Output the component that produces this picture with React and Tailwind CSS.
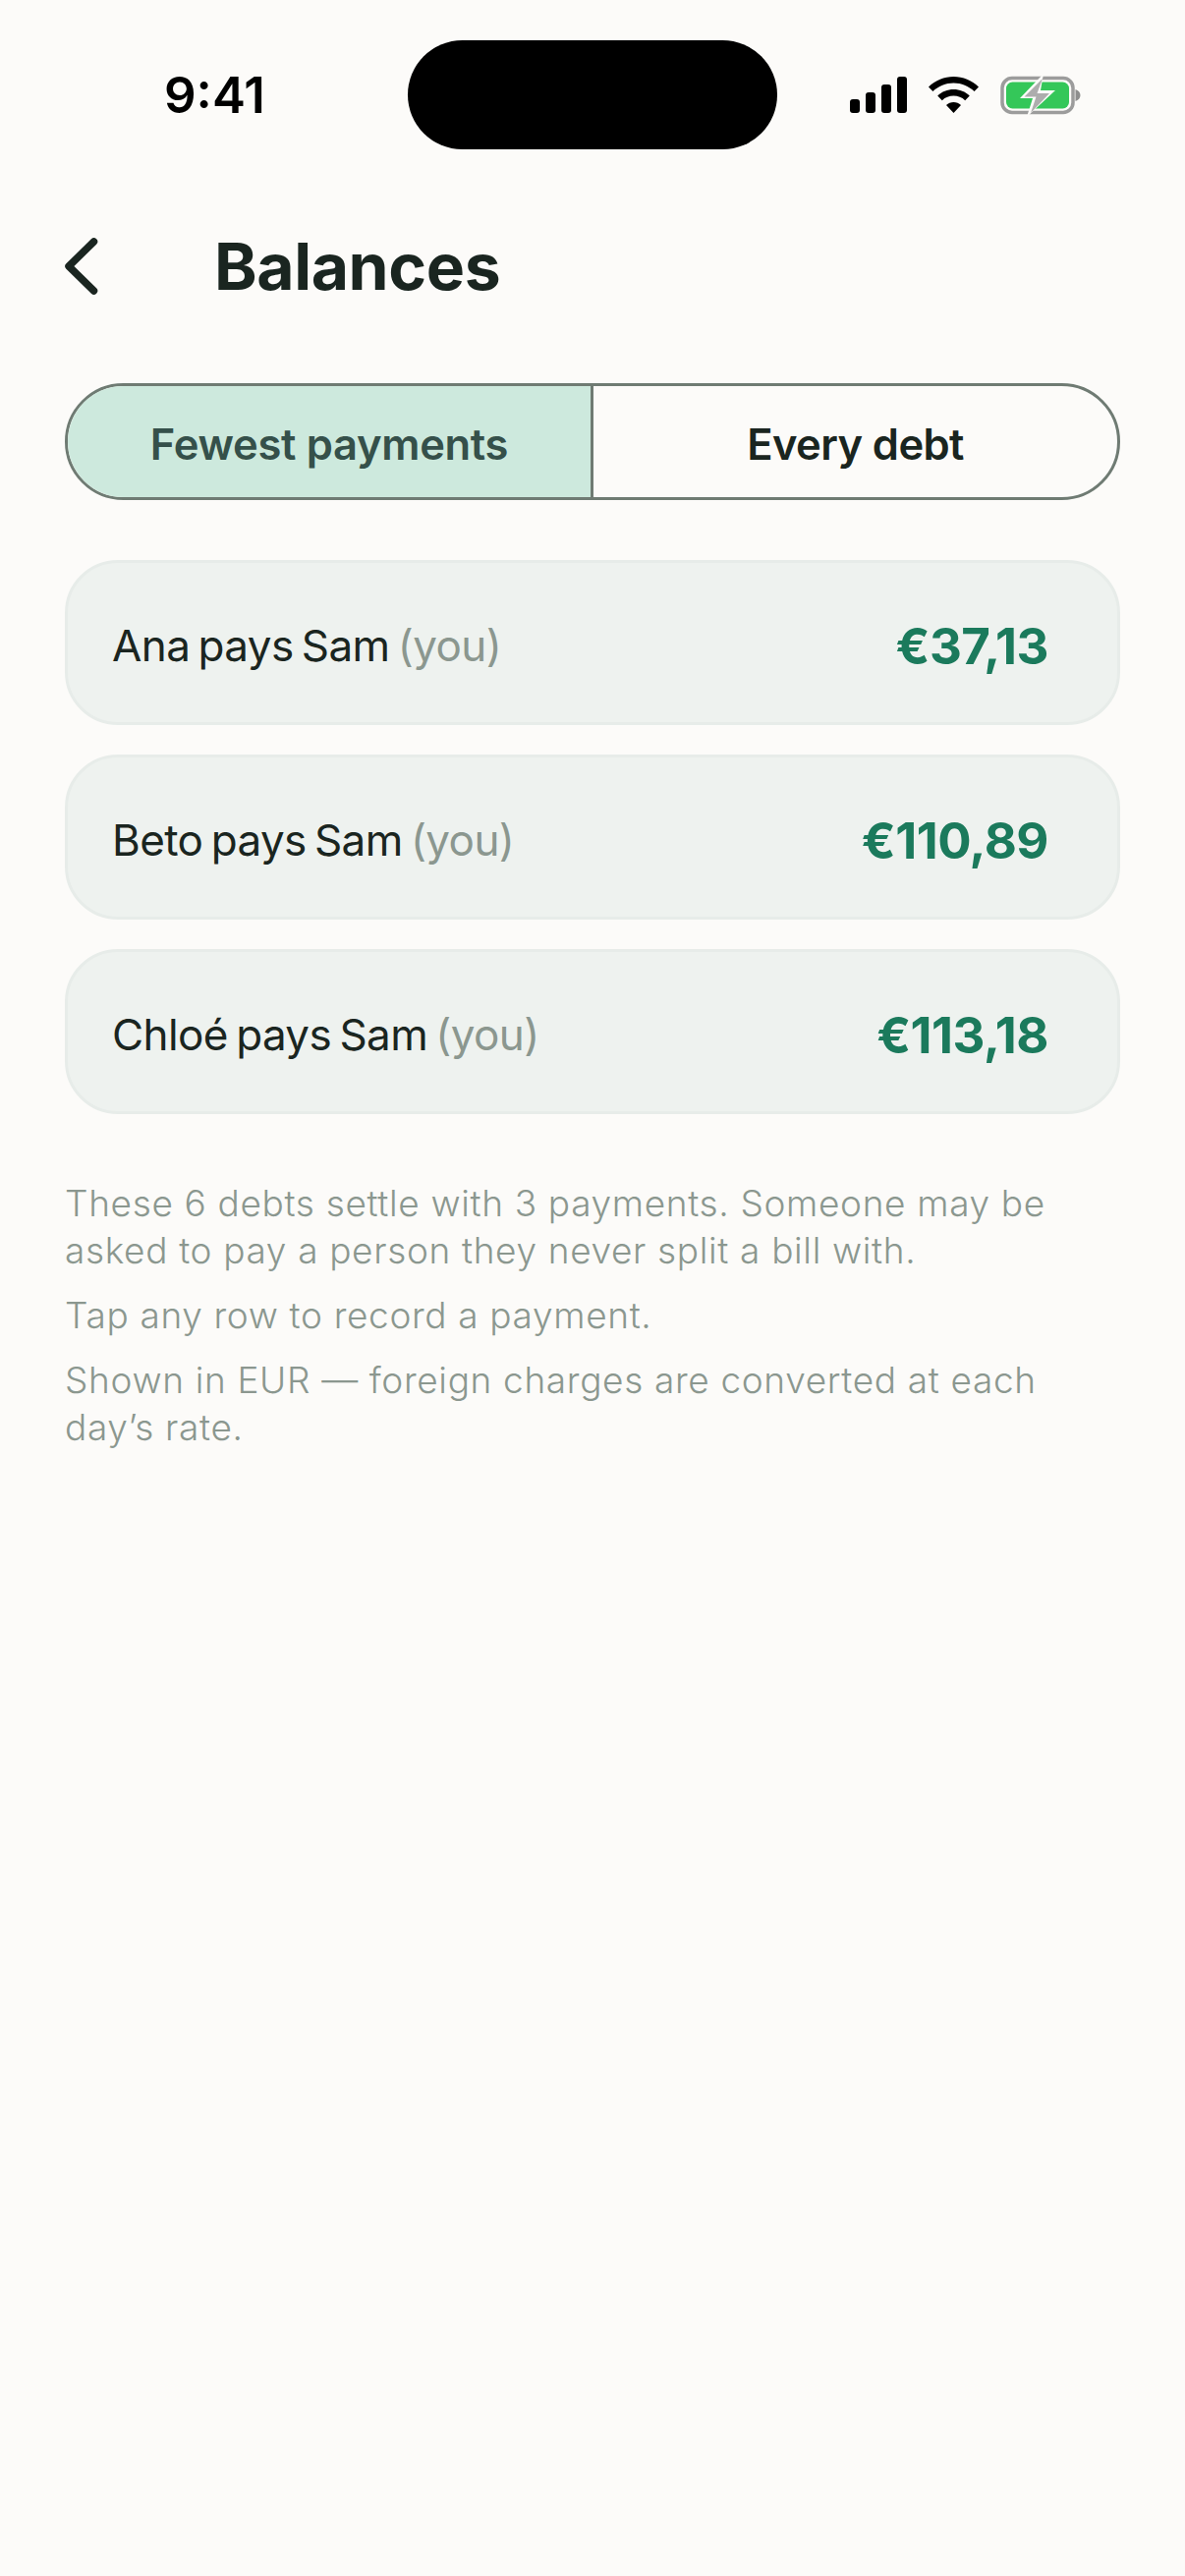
import React from "react";

function Signal() {
  return (
    <svg width="58" height="37" viewBox="0 0 58 37" fill="#000">
      <rect x="0" y="23" width="10" height="14" rx="3" />
      <rect x="16" y="16" width="10" height="21" rx="3" />
      <rect x="32" y="8" width="10" height="29" rx="3" />
      <rect x="48" y="0" width="10" height="37" rx="3" />
    </svg>
  );
}

function Wifi() {
  return (
    <svg width="51" height="37" viewBox="0 0 51 37" fill="#000">
      <path d="M25.5 0C35 0 44 3.7 51 10.4L46.6 15C40.8 9.6 33.4 6.5 25.5 6.5S10.2 9.6 4.4 15L0 10.4C7 3.7 16 0 25.5 0Z" />
      <path d="M25.5 13C31.7 13 37.4 15.3 41.8 19.5L37.2 24.2C34 21.2 29.9 19.6 25.5 19.6S17 21.2 13.8 24.2L9.2 19.5C13.6 15.3 19.3 13 25.5 13Z" />
      <path d="M25.5 26C28.3 26 31 27 33 28.9L25.5 37L18 28.9C20 27 22.7 26 25.5 26Z" />
    </svg>
  );
}

function Battery() {
  return (
    <svg width="82" height="40" viewBox="0 0 82 40" fill="none">
      <rect x="2" y="2.5" width="72" height="35" rx="10" stroke="#9c9c9c" strokeWidth="3.5" />
      <rect x="6" y="6.5" width="64" height="27" rx="6.5" fill="#34c759" />
      <path d="M76.5 14C79.5 15 81.5 17.2 81.5 20S79.5 25 76.5 26Z" fill="#8e8e8e" />
      <path d="M44 -2L20 23H33L27 42L56 15H41Z" fill="#fcfbf9" />
      <path d="M43 3L24.5 21.5H36.5L31 38L50 18H37.5Z" fill="#adadad" />
    </svg>
  );
}

function Chevron() {
  return (
    <svg width="34" height="58" viewBox="0 0 34 58" fill="none" stroke="#1a2520" strokeWidth="7.5" strokeLinecap="round" strokeLinejoin="round">
      <path d="M29.5 4L4 29L29.5 54" />
    </svg>
  );
}

function Row({ who, amount }) {
  return (
    <div className="flex h-[168px] items-center justify-between rounded-[54px] border-[3px] border-[#e7ece9] bg-[#eef2ef] pt-[6px] pl-[45px] pr-[70px]">
      <div className="text-[44px] leading-none tracking-[-0.6px] [word-spacing:-3.5px] text-[#1a2520]">
        {who} pays Sam <span className="text-[#8b978f]">(you)</span>
      </div>
      <div className="text-[51px] leading-none font-bold tracking-[-0.5px] text-[#1b7a5c]">{amount}</div>
    </div>
  );
}

export default function App() {
  return (
    <div className="min-h-[2622px] bg-[#fcfbf9] pt-[41px] font-['Inter',sans-serif]">
      <div className="flex h-[111px] items-center">
        <div className="ml-[167px] w-[248px] text-[51px] leading-none font-semibold text-black">9:41</div>
        <div className="h-[111px] w-[376px] rounded-[56px] bg-black"></div>
        <div className="ml-[74px] flex items-center gap-[22px]">
          <Signal />
          <Wifi />
          <Battery />
        </div>
      </div>

      <div className="mt-[90px] flex h-[58px] items-center pl-[66px]">
        <Chevron />
        <div className="ml-[118px] text-[66px] leading-none font-bold tracking-[-0.4px] text-[#1a2520]">Balances</div>
      </div>

      <div className="mx-[66px] mt-[90px] flex h-[119px] overflow-hidden rounded-[60px] border-[3px] border-[#6f7b73]">
        <div className="flex w-[535px] items-center justify-center border-r-[3px] border-[#6f7b73] bg-[#cde9dd] pt-[6px] text-[43.5px] font-semibold tracking-[-0.3px] text-[#35504a]">
          Fewest payments
        </div>
        <div className="flex flex-1 items-center justify-center pt-[6px] text-[43.5px] font-semibold tracking-[-0.6px] text-[#1a2520]">
          Every debt
        </div>
      </div>

      <div className="mx-[66px] mt-[61px] flex flex-col gap-[30px]">
        <Row who="Ana" amount="€37,13" />
        <Row who="Beto" amount="€110,89" />
        <Row who="Chloé" amount="€113,18" />
      </div>

      <div className="mx-[66px] mt-[67px] flex flex-col gap-[18px] text-[37px] leading-[48px] font-light tracking-[0.65px] text-[#8b978f]">
        <p>These 6 debts settle with 3 payments. Someone may be asked to pay a person they never split a bill with.</p>
        <p>Tap any row to record a payment.</p>
        <p>Shown in EUR — foreign charges are converted at each day’s rate.</p>
      </div>
    </div>
  );
}
